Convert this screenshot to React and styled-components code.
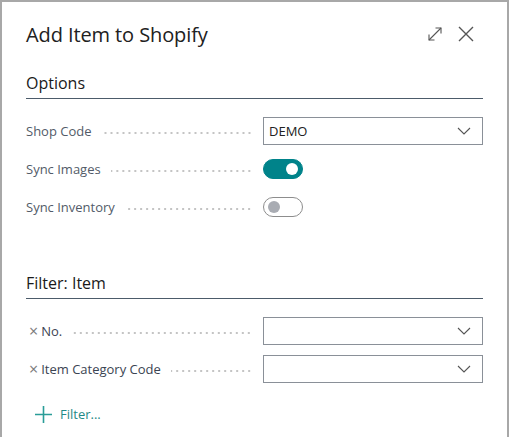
import styled, { createGlobalStyle } from 'styled-components'

const GlobalStyle = createGlobalStyle`
  html, body {
    margin: 0;
    padding: 0;
    background: #a8a8a8;
    overflow: hidden;
  }
  body {
    font-family: "Segoe UI", "Open Sans", "Noto Sans", sans-serif;
  }
`

export default function App() {
  return (
    <>
      <GlobalStyle />
      <Dialog>
        <Header>
          <Title>Add Item to Shopify</Title>
          <HeaderIcons>
            <IconButton aria-label="Expand">
              <svg width="16" height="16" viewBox="0 0 16 16" fill="none" stroke="#555" strokeWidth="1.1">
                <path d="M2 14 L14 2" />
                <path d="M8.5 2 H14 V7.5" />
                <path d="M2 8.5 V14 H7.5" />
              </svg>
            </IconButton>
            <IconButton aria-label="Close">
              <svg width="18" height="18" viewBox="0 0 18 18" fill="none" stroke="#555" strokeWidth="1.4">
                <path d="M2 2 L16 16 M16 2 L2 16" />
              </svg>
            </IconButton>
          </HeaderIcons>
        </Header>

        <Section>
          <SectionTitle>Options</SectionTitle>
          <Fields>
            <Row>
              <Label>
                <LabelText>Shop Code</LabelText>
                <Leader />
              </Label>
              <Select value="DEMO" />
            </Row>
            <Row>
              <Label>
                <LabelText>Sync Images</LabelText>
                <Leader />
              </Label>
              <Toggle on />
            </Row>
            <Row>
              <Label>
                <LabelText>Sync Inventory</LabelText>
                <Leader />
              </Label>
              <Toggle />
            </Row>
          </Fields>
        </Section>

        <Section $gap>
          <SectionTitle>Filter: Item</SectionTitle>
          <Fields>
            <Row>
              <Label>
                <Remove>×</Remove>
                <LabelText $dark>No.</LabelText>
                <Leader />
              </Label>
              <Select />
            </Row>
            <Row>
              <Label>
                <Remove>×</Remove>
                <LabelText $dark>Item Category Code</LabelText>
                <Leader />
              </Label>
              <Select />
            </Row>
          </Fields>
          <AddFilter>
            <svg width="17" height="17" viewBox="0 0 17 17" stroke="#2a9d98" strokeWidth="1.6">
              <path d="M8.5 0 V17 M0 8.5 H17" />
            </svg>
            <span>Filter...</span>
          </AddFilter>
        </Section>
      </Dialog>
    </>
  )
}

function Select({ value }) {
  return (
    <SelectBox>
      <SelectValue>{value}</SelectValue>
      <svg width="14" height="8" viewBox="0 0 14 8" fill="none" stroke="#555" strokeWidth="1.1">
        <path d="M1 1 L7 7 L13 1" />
      </svg>
    </SelectBox>
  )
}

function Toggle({ on }) {
  return (
    <Track $on={on}>
      <Knob $on={on} />
    </Track>
  )
}

const Dialog = styled.div`
  margin: 2px 2px 0 2px;
  height: 460px;
  background: #fff;
  padding: 0 24px;
  box-sizing: border-box;
`

const Header = styled.div`
  display: flex;
  align-items: center;
  justify-content: space-between;
  height: 64px;
`

const Title = styled.h1`
  margin: 0;
  font-size: 20px;
  font-weight: 400;
  color: #212121;
  letter-spacing: -0.1px;
`

const HeaderIcons = styled.div`
  display: flex;
  align-items: center;
  gap: 14px;
  margin-right: 8px;
`

const IconButton = styled.div`
  display: flex;
  align-items: center;
  justify-content: center;
`

const Section = styled.div`
  margin-top: ${p => (p.$gap ? '51px' : '6px')};
`

const SectionTitle = styled.h2`
  margin: 0;
  font-size: 16px;
  font-weight: 500;
  color: #1a1a1a;
  padding-bottom: 4px;
  border-bottom: 1px solid #4c5b6a;
  line-height: 22px;
`

const Fields = styled.div`
  display: flex;
  flex-direction: column;
  gap: 10px;
  padding-top: 18px;
`

const Row = styled.div`
  display: grid;
  grid-template-columns: 237px 1fr;
  align-items: center;
  height: 28px;
`

const Label = styled.div`
  display: flex;
  align-items: center;
  padding-right: 11px;
  min-width: 0;
`

const LabelText = styled.span`
  font-size: 13px;
  color: ${p => (p.$dark ? '#3b4452' : '#525b68')};
  white-space: nowrap;
`

const Remove = styled.span`
  font-size: 16px;
  color: #7a7a7a;
  margin-right: 3px;
  line-height: 1;
  margin-left: 3px;
`

const Leader = styled.span`
  flex: 1;
  height: 2px;
  margin-left: 10px;
  margin-top: 3px;
  background-image: radial-gradient(circle, #c4c4c4 0.8px, transparent 1px);
  background-size: 6px 2px;
  background-repeat: repeat-x;
  background-position: right center;
`

const SelectBox = styled.div`
  height: 28px;
  box-sizing: border-box;
  border: 1px solid #8a9098;
  display: flex;
  align-items: center;
  justify-content: space-between;
  padding: 0 11px 0 5px;
`

const SelectValue = styled.span`
  font-size: 13px;
  color: #212121;
`

const Track = styled.div`
  width: 40px;
  height: 20px;
  box-sizing: border-box;
  border-radius: 10px;
  border: 1px solid ${p => (p.$on ? '#00838a' : '#8d8d8d')};
  background: ${p => (p.$on ? '#00838a' : '#fff')};
  display: flex;
  align-items: center;
  justify-content: ${p => (p.$on ? 'flex-end' : 'flex-start')};
  padding: 0 4px;
`

const Knob = styled.span`
  width: 12px;
  height: 12px;
  border-radius: 50%;
  background: ${p => (p.$on ? '#fff' : '#a9acb3')};
`

const AddFilter = styled.div`
  display: flex;
  align-items: center;
  gap: 8px;
  margin-top: 22px;
  padding-left: 9px;
  font-size: 13px;
  color: #1f8a87;
`
